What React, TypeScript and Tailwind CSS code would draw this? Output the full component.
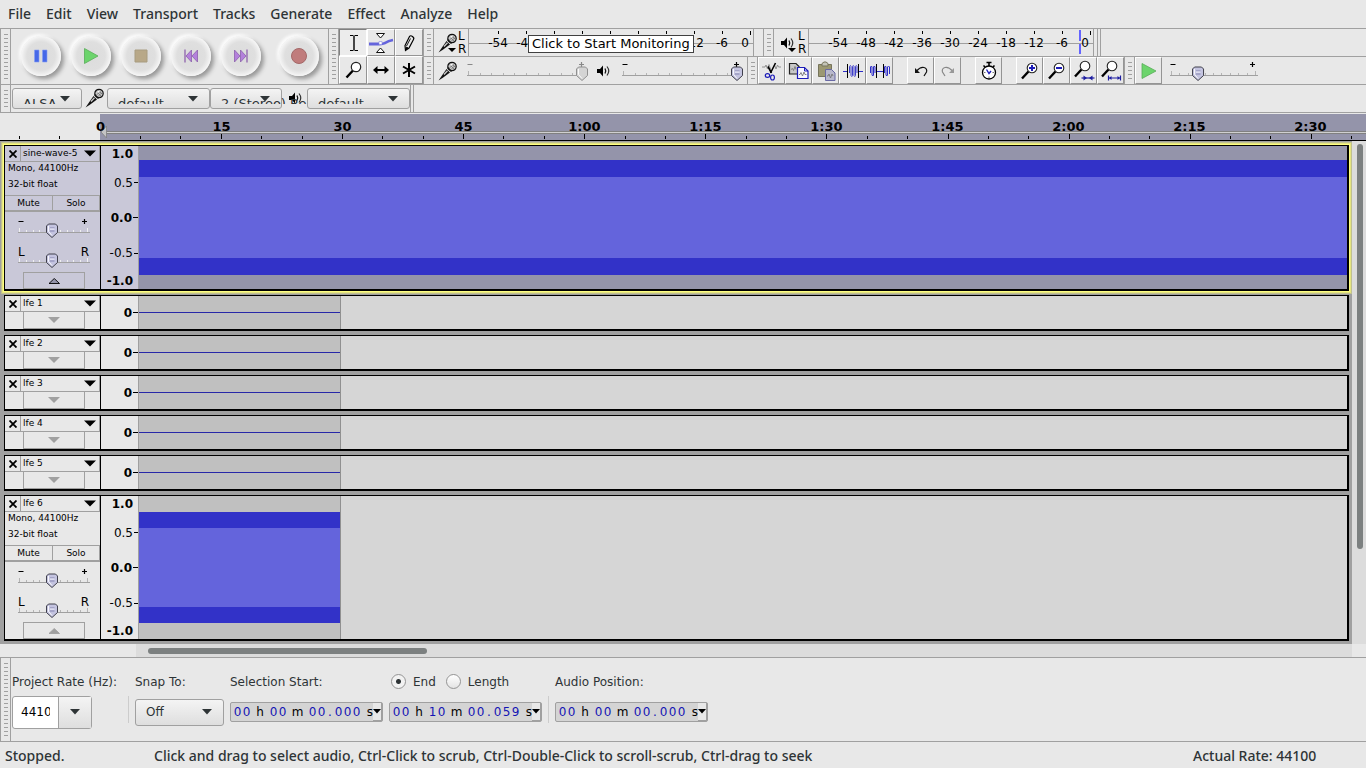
import React, { useId, useState } from "react";

/* ---------- small shared pieces ---------- */

function Grabber() {
  return (
    <div className="flex w-[11px] shrink-0 items-stretch justify-center border-x border-[#a0a0a0] py-[5px]">
      <div className="w-1 bg-[repeating-linear-gradient(to_bottom,#a0a0a0_0px,#a0a0a0_1px,transparent_1px,transparent_4px)]" />
    </div>
  );
}

function IconButton({
  label,
  pressed,
  children,
}: {
  label: string;
  pressed?: boolean;
  children: React.ReactNode;
}) {
  return (
    <button
      type="button"
      aria-label={label}
      aria-pressed={pressed}
      className={
        pressed
          ? "flex h-full min-w-[27px] items-center justify-center border border-t-[#808080] border-r-white border-b-white border-l-[#808080] bg-[#ececec]"
          : "flex h-full min-w-[27px] items-center justify-center border border-t-white border-r-[#949494] border-b-[#949494] border-l-white"
      }
    >
      {children}
    </button>
  );
}

function Mic() {
  return (
    <svg width="20" height="20" viewBox="0 0 20 20" className="shrink-0">
      <path d="M0.500 19.500L8.500 8l3.500 3.500L4.500 17z" fill="#111" />
      <path d="M6 13.500L9.500 9.800" stroke="#ccc" strokeWidth="1.300" />
      <circle cx="14" cy="5.500" r="4.200" fill="#c8c8c8" stroke="#111" strokeWidth="1.200" />
      <path d="M9.500 6.500l4 4" stroke="#111" strokeWidth="1.600" />
      <path d="M11.500 3.500l4.500 4.500M13.500 2.500l3.500 3.500M11.500 7l4-4M13 8.500l4-4" stroke="#666" strokeWidth="0.700" />
      <path d="M12.500 4.500l2-1.500" stroke="#fff" strokeWidth="1.300" />
    </svg>
  );
}

function Speaker() {
  return (
    <svg width="14" height="14" viewBox="0 0 14 14" className="shrink-0">
      <path d="M0 5h3l3-3.500v11L3 9H0z" fill="#000" />
      <path d="M8 4.500q1.500 2.500 0 5" fill="none" stroke="#111" strokeWidth="1.300" />
      <path d="M10 2.500q3.500 4.500 0 9" fill="none" stroke="#333" strokeWidth="1.200" />
    </svg>
  );
}

function Caret() {
  return (
    <svg width="10" height="6" viewBox="0 0 10 6" className="pointer-events-none shrink-0">
      <path d="M0 0h10L5 5.500z" fill="#2e3436" />
    </svg>
  );
}

function Slider({
  label,
  width,
  start,
  ticks = 10,
  travel,
  disabled,
  light,
  signs = true,
}: {
  label: string;
  width: number;
  start: number;
  ticks?: number;
  travel: number;
  disabled?: boolean;
  light?: boolean;
  signs?: boolean;
}) {
  const [value, setValue] = useState(start);
  const x = 2 + (value / 100) * travel;
  const last = width - 4;
  return (
    <div className="relative h-5 shrink-0" style={{ width }}>
      <svg width={width} height="20" className="block overflow-visible">
        <path d={`M0 13.500H${width}`} stroke="#a0a0a0" />
        {Array.from({ length: ticks + 1 }, (_, i) => {
          const tx = Math.round(1 + (i * last) / ticks) + 0.5;
          return (
            <path
              key={i}
              d={`M${tx} ${i === 0 || i === ticks ? 9 : 11}V13`}
              stroke={light ? "#f0f0f0" : "#b4b4b4"}
            />
          );
        })}
        {signs && (
          <path
            d={`M0.500 2.500h5M${width - 8} 2.500h5M${width - 5.5} 0v5`}
            stroke={disabled ? "#888" : "#000"}
            strokeWidth="1.200"
          />
        )}
        <g transform={`translate(${x - 5.5} 4.5)`}>
          <path
            d="M2 0.500h7l2 2v6.500L5.500 14L0 9v-6.500z"
            fill={disabled ? "#d4d4d4" : "#c4c4e0"}
            stroke={disabled ? "#909090" : "#40404c"}
          />
          <path d="M2 2.500v5.500l3.500 4" stroke="#fff" fill="none" opacity="0.900" />
          {!disabled && <path d="M3.500 4.500h4.500M3.500 7.500h4.500" stroke="#8484b0" />}
          {!disabled && <path d="M3.500 5.500h4.500" stroke="#f4f4ff" />}
        </g>
      </svg>
      <input
        type="range"
        aria-label={label}
        value={value}
        disabled={disabled}
        onChange={(e) => setValue(Number(e.target.value))}
        className="absolute inset-0 m-0 h-full w-full opacity-0"
      />
    </div>
  );
}

/* ---------- transport ---------- */

function RoundButton({ label, children }: { label: string; children: React.ReactNode }) {
  return (
    <button type="button" aria-label={label} className="flex w-[50px] items-center justify-center pb-px">
      <span className="flex h-[40px] w-[40px] items-center justify-center rounded-full bg-[radial-gradient(circle,#dcdcdc_0%,#dfdfdf_50%,#ececec_62%,#f6f6f6_70%)] shadow-[3px_3px_4px_#989898,-2px_-2px_3px_#fcfcfc]">
        <svg width="18" height="18" viewBox="0 0 18 18">
          {children}
        </svg>
      </span>
    </button>
  );
}

function Transport() {
  return (
    <div className="flex w-[317px] shrink-0 pl-[5px]">
      <RoundButton label="Pause">
        <path d="M2.500 3H7v12H2.500zM10.500 3H15v12h-4.500z" fill="#4668e8" stroke="#86a0f4" strokeWidth="0.600" />
      </RoundButton>
      <RoundButton label="Play">
        <path d="M2.500 1.500v15L16 9z" fill="#6cd46c" stroke="#58ac58" strokeWidth="0.800" />
      </RoundButton>
      <RoundButton label="Stop">
        <path d="M3 3h12v12H3z" fill="#b8a888" stroke="#a89c80" />
      </RoundButton>
      <RoundButton label="Skip to Start">
        <path d="M3 2.500v13" stroke="#8858a8" strokeWidth="1.200" />
        <path d="M9.500 3v12L4 9zM15.500 3v12L10 9z" fill="#b480dc" stroke="#8c60ac" strokeWidth="0.800" />
      </RoundButton>
      <RoundButton label="Skip to End">
        <path d="M15 2.500v13" stroke="#8858a8" strokeWidth="1.200" />
        <path d="M8.500 3v12L14 9zM2.500 3v12L8 9z" fill="#b480dc" stroke="#8c60ac" strokeWidth="0.800" />
      </RoundButton>
      <div className="ml-2 flex">
        <RoundButton label="Record">
          <circle cx="9" cy="9" r="7.500" fill="#c07c7c" stroke="#a46868" />
        </RoundButton>
      </div>
    </div>
  );
}

/* ---------- tools ---------- */

function Tools() {
  return (
    <div className="grid shrink-0 grid-cols-[28px_28px_28px] grid-rows-[27px_28px]">
      <IconButton label="Selection Tool" pressed>
        <svg width="18" height="20" viewBox="0 0 18 20" fill="none" stroke="#000">
          <path d="M6 2.500h3.500M10.500 2.500H14M6 17.500h3.500M10.500 17.500H14" />
          <path d="M10 3v14" strokeWidth="1.400" />
        </svg>
      </IconButton>
      <IconButton label="Envelope Tool">
        <svg width="26" height="22" viewBox="0 0 26 22">
          <path d="M1 12h10q5 0 7-1.500t7-2.500" stroke="#6464dc" strokeWidth="2.800" fill="none" />
          <path d="M8.500 1.500h8L12.500 6zM8.500 20.500h8L12.500 16z" fill="#fff" stroke="#111" />
          <path d="M11 9.500h3v3h-3z" fill="#fff" stroke="#8888e0" strokeWidth="0.600" />
        </svg>
      </IconButton>
      <IconButton label="Draw Tool">
        <svg width="16" height="18" viewBox="0 0 16 18">
          <path d="M4.500 16.500l-.5-5L8.500 2.500q1-1.500 3 0t1 3L8 14z" fill="#e8e8e8" stroke="#000" strokeWidth="1.200" />
          <path d="M9.500 4.500L5.500 12M4.500 16l1-3 1.500 1z" fill="#000" stroke="#000" strokeWidth="0.900" />
        </svg>
      </IconButton>
      <IconButton label="Zoom Tool">
        <svg width="18" height="18" viewBox="0 0 18 18">
          <path d="M2.500 16.500L9 9.500" stroke="#000" strokeWidth="2.400" />
          <circle cx="12" cy="6" r="4.700" fill="#fff" stroke="#222" strokeWidth="1.200" />
        </svg>
      </IconButton>
      <IconButton label="Time Shift Tool">
        <svg width="18" height="10" viewBox="0 0 18 10">
          <path d="M3 5h12" stroke="#000" strokeWidth="2" />
          <path d="M1 5l4.500-4v8zM17 5l-4.500-4v8z" fill="#000" />
        </svg>
      </IconButton>
      <IconButton label="Multi Tool">
        <svg width="16" height="16" viewBox="0 0 16 16" stroke="#000" strokeWidth="2">
          <path d="M8 1v14M2 4.500l12 7M14 4.500l-12 7" />
        </svg>
      </IconButton>
    </div>
  );
}

/* ---------- level meters ---------- */

const levels = ["-54", "-48", "-42", "-36", "-30", "-24", "-18", "-12", "-6"];

function Meter({
  label,
  icon,
  peak,
  tooltip,
}: {
  label: string;
  icon: React.ReactNode;
  peak?: boolean;
  tooltip?: string;
}) {
  // Labels that the tooltip covers completely are left out.
  const covered = (i: number) => Boolean(tooltip) && i >= 2 && i <= 6;
  return (
    <div className="flex w-[329px] shrink-0 pl-1">
      <button type="button" aria-label={label + " options"} className="relative flex w-5 items-center justify-center">
        {icon}
        <svg width="8" height="4" viewBox="0 0 8 4" className="absolute right-[2px] bottom-1">
          <path d="M0 0h8L4 4z" fill="#000" />
        </svg>
      </button>
      <div className="flex w-[10px] flex-col justify-center text-xs leading-[13px]">
        <span>L</span>
        <span>R</span>
      </div>
      <div
        role="meter"
        aria-label={label}
        className="relative flex w-[286px] border-x border-[#a0a0a0] bg-[linear-gradient(#a0a0a0,#a0a0a0)] bg-[length:100%_1px] bg-[position:0_14px] bg-no-repeat pl-[15px] text-xs leading-7"
      >
        {peak && (
          <div className="absolute top-px right-3 flex h-6 w-[2px] flex-col gap-[3px]">
            <div className="flex-1 bg-[#6464ff]" />
            <div className="flex-1 bg-[#6464ff]" />
          </div>
        )}
        {levels.map((l, i) => (
          <div key={l} className="relative flex w-7 justify-center">
            <div className="absolute top-[2px] left-[14px] h-[3px] w-px bg-black" />
            {!covered(i) && <span>{l}</span>}
          </div>
        ))}
        <div className="relative flex flex-1 justify-end pr-1">
          <div className="absolute top-[2px] right-[2px] h-1 w-px bg-black" />
          <span>0</span>
        </div>
        {tooltip && (
          <div
            role="tooltip"
            className="absolute top-[6px] left-[59px] z-10 border border-[#404040] bg-white px-[3px] text-[13px] leading-4 whitespace-nowrap"
          >
            {tooltip}
          </div>
        )}
      </div>
    </div>
  );
}

/* ---------- edit toolbar ---------- */

function Magnifier({ children, small }: { children: React.ReactNode; small?: boolean }) {
  return (
    <svg width="22" height="22" viewBox="0 0 22 22">
      <g transform={small ? "translate(-1 -2)" : ""}>
        <path d="M3 18.500L9.500 11.500" stroke="#000" strokeWidth="2.400" />
        <circle cx="13" cy="8" r="4.800" fill="#fff" stroke="#222" strokeWidth="1.100" />
      </g>
      {children}
    </svg>
  );
}

function EditTools() {
  return (
    <div className="flex shrink-0">
      <IconButton label="Cut">
        <svg width="22" height="22" viewBox="0 0 22 22" fill="none">
          <path d="M1 7h3l1-2 1.500 4L8 4.500l1.500 4.500M13.500 5l1.500 4 1.500-4 1 2H20" stroke="#888" strokeWidth="0.900" />
          <path d="M14.500 3L9.500 13M7 6.500l3.500 6.500" stroke="#000" strokeWidth="1.600" />
          <ellipse cx="6.500" cy="15.500" rx="2.200" ry="1.900" stroke="#1c1cb8" strokeWidth="1.200" />
          <ellipse cx="11.500" cy="17.500" rx="1.900" ry="2.500" stroke="#1c1cb8" strokeWidth="1.200" />
        </svg>
      </IconButton>
      <IconButton label="Copy">
        <svg width="22" height="20" viewBox="0 0 22 20" fill="none">
          <path d="M1.500 2.500h6.500l3 3v7.500H1.500z" fill="#c8c8c8" stroke="#222" strokeWidth="1.200" />
          <path d="M3 8.500l1.500-1 1 2 1.500-4 1 3" stroke="#777" strokeWidth="0.900" />
          <path d="M9.500 6.500h7l3.500 3.500v7.500H9.500z" fill="#f6f6ff" stroke="#1c1cb8" strokeWidth="1.200" />
          <path d="M16.500 6.500V10H20" stroke="#1c1cb8" />
          <path d="M11 13.500h1l1-2 1.500 3.500 1.500-4 1 2.500h1.500" stroke="#777" strokeWidth="0.900" />
        </svg>
      </IconButton>
      <IconButton label="Paste">
        <svg width="22" height="22" viewBox="0 0 22 22" fill="none">
          <path d="M3.500 4.500h13v12h-13z" fill="#9c9872" stroke="#77755c" />
          <path d="M7 6V3.500l2-1.500h2l2 1.500V6z" fill="#c4c4b8" stroke="#77755c" />
          <path d="M10.500 9.500h6l3.500 3.500v7.500h-9.500z" fill="#b8b8cc" stroke="#6868a4" />
          <path d="M12 16h1l1-2 1.500 4 1.500-4 1 2" stroke="#777" strokeWidth="0.900" />
        </svg>
      </IconButton>
      <IconButton label="Trim">
        <svg width="22" height="16" viewBox="0 0 22 16" fill="none">
          <path d="M1 8.500h4.500M16.500 8.500H21" stroke="#2c2cc8" strokeWidth="1.100" />
          <path d="M7.500 10V3.500q1-2 1.500 0v9q.8 2 1.500 0v-9q.8-2 1.500 0v9q.8 2 1.500 0v-9q.8-2 1.500 0V10" stroke="#2c2cc8" strokeWidth="0.900" />
          <path d="M5.500 1v14M16.500 1v14" stroke="#000" />
        </svg>
      </IconButton>
      <IconButton label="Silence">
        <svg width="22" height="16" viewBox="0 0 22 16" fill="none">
          <path d="M1.500 10V4q1-2 1.500 0v8q.8 2 1.500 0V4q.8-2 1.500 0v6M7.500 8.500h7M15.500 10V4q1-2 1.500 0v8q.8 2 1.500 0V4q1-2 2 0v7" stroke="#2c2cc8" />
          <path d="M7.500 1v14M14.500 1v14" stroke="#000" />
        </svg>
      </IconButton>
      <div className="ml-[14px] flex">
        <IconButton label="Undo">
          <svg width="16" height="14" viewBox="0 0 16 14">
            <path d="M3.500 7Q7.500 2.500 11 3.500t2.500 4.500L11 12" fill="none" stroke="#111" strokeWidth="1.200" />
            <path d="M2 4v5h5z" fill="#111" />
          </svg>
        </IconButton>
        <IconButton label="Redo">
          <svg width="16" height="14" viewBox="0 0 16 14">
            <path d="M12.500 7Q8.500 2.500 5 3.500T2.500 8L5 12" fill="none" stroke="#888" strokeWidth="1.200" />
            <path d="M14 4v5H9z" fill="#999" />
          </svg>
        </IconButton>
      </div>
      <div className="ml-[14px] flex">
        <IconButton label="Sync-Lock Tracks">
          <svg width="18" height="20" viewBox="0 0 18 20" fill="none">
            <circle cx="9" cy="11.500" r="6.500" fill="#fff" stroke="#000" strokeWidth="1.300" />
            <path d="M6.500 1.500h5M9 1v4M3.500 4.500l1.500 1.500M14.500 4.500l-1.500 1.500" stroke="#000" strokeWidth="1.600" />
            <path d="M6.500 8.500l2.500 4 2-2.500" stroke="#1c1cb8" strokeWidth="1.400" />
            <path d="M9 15.500V17M4 11.500h1.500M12.500 11.500H14" stroke="#777" />
          </svg>
        </IconButton>
      </div>
      <div className="ml-[14px] flex">
        <IconButton label="Zoom In">
          <Magnifier>
            <path d="M10 8h6M13 5v6" stroke="#1c1cb8" strokeWidth="2" />
          </Magnifier>
        </IconButton>
        <IconButton label="Zoom Out">
          <Magnifier>
            <path d="M10 8h6" stroke="#1c1cb8" strokeWidth="2" />
          </Magnifier>
        </IconButton>
        <IconButton label="Fit Selection">
          <Magnifier small>
            <path d="M8.500 18h13" stroke="#1c1ca0" strokeWidth="1.200" />
            <path d="M10.500 15.500v5L14 18zM19.500 15.500v5L16 18z" fill="#1c1ca0" />
          </Magnifier>
        </IconButton>
        <IconButton label="Fit Project">
          <Magnifier small>
            <path d="M8.500 15.500v5M20.500 15.500v5M9 18h11" stroke="#1c1ca0" strokeWidth="1.200" />
            <path d="M9 18l2.500-2v4zM20 18l-2.500-2v4z" fill="#1c1ca0" />
          </Magnifier>
        </IconButton>
      </div>
    </div>
  );
}

/* ---------- device toolbar ---------- */

function DeviceSelect({ label, value, size }: { label: string; value: string; size: string }) {
  return (
    <div
      className={
        size +
        " relative h-[21px] shrink-0 rounded-[3px] border border-[#a0a0a0] bg-linear-to-b from-[#f4f4f4] to-[#dedede]"
      }
    >
      <div className="absolute inset-x-0 top-0 h-[15px] overflow-x-visible overflow-y-clip">
        <select
          aria-label={label}
          defaultValue={value}
          className="h-[30px] appearance-none bg-transparent pl-[10px] text-[13px] text-[#2e3436] outline-none"
        >
          <option>{value}</option>
        </select>
      </div>
      <div className="pointer-events-none absolute top-[7px] right-[11px]">
        <Caret />
      </div>
    </div>
  );
}

/* ---------- timeline ---------- */

const times = ["0", "15", "30", "45", "1:00", "1:15", "1:30", "1:45", "2:00", "2:15", "2:30"];

function Timeline() {
  return (
    <div className="relative flex h-7 overflow-hidden border-b border-black">
      <div className="w-[100px] shrink-0" />
      <div className="mt-px flex-1 bg-[#9494aa]" />
      <svg className="absolute inset-0 h-full w-full">
        <path d="M106 18.500H2600M106 20.500H2600" stroke="#808080" />
        <path d="M106 19.500H2600" stroke="#d0d0d0" />
        <path d="M101 19l5.500-6v12z" fill="#c4c4c4" stroke="#808080" strokeWidth="0.800" />
        {Array.from({ length: 62 }, (_, i) => {
          const x = Math.round(19 + i * 40.37) + 0.5;
          return i === 2 ? null : <path key={i} d={`M${x} ${i % 3 === 2 ? 21 : 23}V26`} stroke="#000" />;
        })}
      </svg>
      <div className="absolute top-2 left-10 flex text-[13px] leading-3 font-bold">
        {times.map((t) => (
          <span key={t} className="w-[121px] text-center">
            {t}
          </span>
        ))}
      </div>
    </div>
  );
}

/* ---------- tracks ---------- */

function TitleRow({ name }: { name: string }) {
  return (
    <div className="flex h-4 shrink-0 border-b border-[#a0a0a0]">
      <button type="button" aria-label={"Close " + name} className="flex w-4 items-center justify-center border-r border-[#a0a0a0]">
        <svg width="8" height="8" viewBox="0 0 8 8">
          <path d="M0.500 0.500l7 7M7.500 0.500l-7 7" stroke="#000" strokeWidth="1.800" />
        </svg>
      </button>
      <button type="button" className="flex flex-1 items-center justify-between border-r border-[#a0a0a0] pr-[3px] pl-[2px] text-[9px]">
        <span className="whitespace-nowrap">{name}</span>
        <svg width="12" height="7" viewBox="0 0 12 7">
          <path d="M0 0.500h12L6 6.500z" fill="#000" />
        </svg>
      </button>
    </div>
  );
}

function TrackFrame({ selected, children }: { selected?: boolean; children: React.ReactNode }) {
  return (
    <section
      className={
        selected
          ? "flex border-t border-r-2 border-b-2 border-l border-black shadow-[0_0_0_1px_#ffff80,0_0_0_2px_#e4e480,0_0_0_3px_#c0c090]"
          : "flex border-t border-r-2 border-b-2 border-l border-black"
      }
    >
      {children}
    </section>
  );
}

function ScaleTick({ major }: { major?: boolean }) {
  return <div className={major ? "ml-px h-px w-[5px] bg-black" : "ml-px h-px w-1 bg-black"} />;
}

function FullTrack({ name, selected }: { name: string; selected?: boolean }) {
  const tone = selected ? "bg-[#c9c8d8]" : "bg-[#e8e8e8]";
  return (
    <TrackFrame selected={selected}>
      <div className={tone + " flex h-[143px] w-[96px] shrink-0 flex-col border-r border-black"}>
        <TitleRow name={name} />
        <div className="h-[33px] pl-[3px] text-[9px] leading-[16px] whitespace-nowrap">
          <div className="-mt-[2px]">Mono, 44100Hz</div>
          <div>32-bit float</div>
        </div>
        <div className="flex h-[17px] border-t border-b-2 border-[#a0a0a0] text-[9px] leading-[15px]">
          <button type="button" className="w-12 border-r border-[#a0a0a0]">
            Mute
          </button>
          <button type="button" className="flex-1 border-r border-[#a0a0a0]">
            Solo
          </button>
        </div>
        <div className="mt-[7px] pl-[13px]">
          <Slider label={name + " gain"} width={72} start={50} travel={64} light={selected} />
        </div>
        <div className="relative mt-[10px] pl-[13px]">
          <Slider label={name + " pan"} width={72} start={50} travel={64} light={selected} signs={false} />
          <div className="pointer-events-none absolute inset-x-0 -top-1 flex justify-between pr-[11px] pl-[13px] text-xs leading-[14px]">
            <span>L</span>
            <span>R</span>
          </div>
        </div>
        <button
          type="button"
          aria-label={"Collapse " + name}
          className="mt-[3px] ml-[18px] flex h-[17px] w-[62px] items-center justify-center border border-[#a0a0a0]"
        >
          <svg width="12" height="6" viewBox="0 0 12 6">
            <path
              d="M1 5.500h10.500L6.250 0.500z"
              fill={selected ? "#9494aa" : "#a0a0a0"}
              stroke={selected ? "#000" : "#a0a0a0"}
              strokeWidth="0.900"
            />
          </svg>
        </button>
      </div>
      <div className={tone + " flex w-[38px] shrink-0 flex-col border-r border-[#a0a0a0] text-xs *:flex *:items-center *:justify-end"}>
        <div className="h-[15px] pr-[5px] font-bold">1.0</div>
        <div className="h-[41px] pt-[2px]">
          0.5
          <ScaleTick />
        </div>
        <div className="h-[31px] font-bold">
          0.0
          <ScaleTick major />
        </div>
        <div className="h-10">
          -0.5
          <ScaleTick />
        </div>
        <div className="h-4 pr-[5px] font-bold">-1.0</div>
      </div>
      {selected ? (
        <div className="flex flex-1 flex-col bg-[#9494aa] py-[14px]">
          <div className="flex-1 border-y-[17px] border-[#3232c8] bg-[#6464dc]" />
        </div>
      ) : (
        <div className="flex flex-1 bg-[#d6d6d6]">
          <div className="flex w-[202px] flex-col border-r border-[#909090] bg-[#c0c0c0] py-4">
            <div className="flex-1 border-y-[16px] border-[#3232c8] bg-[#6464dc]" />
          </div>
        </div>
      )}
    </TrackFrame>
  );
}

function CollapsedTrack({ name }: { name: string }) {
  return (
    <TrackFrame>
      <div className="flex h-[33px] w-[96px] shrink-0 flex-col border-r border-black bg-[#e8e8e8]">
        <TitleRow name={name} />
        <button
          type="button"
          aria-label={"Expand " + name}
          className="ml-[18px] flex h-[17px] w-[62px] items-center justify-center border-x border-b border-[#a0a0a0]"
        >
          <svg width="12" height="6" viewBox="0 0 12 6">
            <path d="M0 0h12L6 6z" fill="#a0a0a0" />
          </svg>
        </button>
      </div>
      <div className="flex w-[38px] shrink-0 items-center justify-end border-r border-[#a0a0a0] bg-[#e8e8e8] text-xs font-bold">
        0<ScaleTick major />
      </div>
      <div className="flex flex-1 bg-[#d6d6d6]">
        <div className="flex w-[202px] items-center border-r border-[#909090] bg-[#c0c0c0]">
          <div className="h-px flex-1 bg-[#2828a8]" />
        </div>
      </div>
    </TrackFrame>
  );
}

/* ---------- selection toolbar ---------- */

function TimeField({ label, h, m, s, ms }: { label: string; h: string; m: string; s: string; ms: string }) {
  const digits = (text: string) =>
    text.split("").map((d, i) => (
      <span key={i} className="w-[9px] text-center text-[#1414b4]">
        {d}
      </span>
    ));
  return (
    <div
      role="group"
      aria-label={label}
      className="flex h-5 w-[153px] items-center rounded-[2px] border border-[#a0a0a0] bg-[#d4d4d4] pl-[2px] text-xs text-black"
    >
      {digits(h)}
      <span className="w-[18px] text-center">h</span>
      {digits(m)}
      <span className="w-[21px] text-center">m</span>
      {digits(s)}
      <span className="w-2 text-center text-[#1414b4]">.</span>
      {digits(ms)}
      <span className="w-3 text-right">s</span>
      <button type="button" aria-label={label + " format"} className="flex flex-1 items-center justify-center self-stretch border-r border-b border-[#a0a0a0] bg-[#e8e8e8]">
        <svg width="8" height="5" viewBox="0 0 8 5">
          <path d="M0 0h8L4 4.500z" fill="#000" />
        </svg>
      </button>
    </div>
  );
}

function Field({ title, children }: { title: React.ReactNode; children: React.ReactNode }) {
  return (
    <div className="flex flex-col pt-3">
      <div className="flex h-[23px] items-center whitespace-nowrap">{title}</div>
      <div className="flex h-[38px] items-center">{children}</div>
    </div>
  );
}

function Radio({ name, text, checked }: { name: string; text: string; checked?: boolean }) {
  return (
    <label className="flex items-center gap-[7px]">
      <input
        type="radio"
        name={name}
        defaultChecked={checked}
        className="h-[15px] w-[15px] appearance-none rounded-full border border-[#949494] bg-linear-to-b from-white to-[#e4e4e4] checked:bg-[radial-gradient(circle,#2e3436_0px,#2e3436_2px,#f2f2f2_3px)]"
      />
      {text}
    </label>
  );
}

function SelectionBar() {
  const rate = useId();
  const snap = useId();
  const mode = useId();
  return (
    <div className="flex h-[85px] border-y border-[#a0a0a0] text-xs text-[#2e3436]">
      <Grabber />
      <div className="flex w-[117px] pl-px">
        <Field title={<label htmlFor={rate}>Project Rate (Hz):</label>}>
          <div className="flex h-[33px] w-20 rounded-[3px] border border-[#a0a0a0]">
            <input
              id={rate}
              defaultValue="44100"
              className="w-[46px] rounded-l-[3px] border-r border-[#a0a0a0] bg-white pr-2 pl-2 text-black outline-none"
            />
            <button
              type="button"
              aria-label="Choose project rate"
              className="flex flex-1 items-center justify-center bg-linear-to-b from-[#f4f4f4] to-[#dedede]"
            >
              <Caret />
            </button>
          </div>
        </Field>
      </div>
      <div className="mt-[38px] h-[27px] w-px bg-[#cccccc]" />
      <div className="flex pl-[6px]">
        <Field title={<label htmlFor={snap}>Snap To:</label>}>
          <div className="relative flex h-[27px] w-[89px] items-center rounded-[3px] border border-[#a0a0a0] bg-linear-to-b from-[#f4f4f4] to-[#dedede]">
            <select id={snap} defaultValue="Off" className="h-full w-full appearance-none bg-transparent pl-[10px] outline-none">
              <option>Off</option>
              <option>Nearest</option>
              <option>Prior</option>
            </select>
            <div className="pointer-events-none absolute right-[11px]">
              <Caret />
            </div>
          </div>
        </Field>
      </div>
      <div className="flex gap-[6px] pl-[6px]">
        <Field title="Selection Start:">
          <TimeField label="Selection start" h="00" m="00" s="00" ms="000" />
        </Field>
        <Field
          title={
            <div className="flex gap-[10px] pl-[2px]">
              <Radio name={mode} text="End" checked />
              <Radio name={mode} text="Length" />
            </div>
          }
        >
          <TimeField label="Selection end" h="00" m="10" s="00" ms="059" />
        </Field>
      </div>
      <div className="mt-[38px] ml-[6px] h-[27px] w-px bg-[#cccccc]" />
      <div className="flex pl-[6px]">
        <Field title="Audio Position:">
          <TimeField label="Audio position" h="00" m="00" s="00" ms="000" />
        </Field>
      </div>
    </div>
  );
}

/* ---------- window ---------- */

const menus = ["File", "Edit", "View", "Transport", "Tracks", "Generate", "Effect", "Analyze", "Help"];

export default function App() {
  return (
    <div className="flex min-h-screen flex-col overflow-hidden bg-[#e8e8e8] font-['DejaVu_Sans',sans-serif] text-black">
      <nav className="flex h-7 items-center gap-[15px] pl-2 font-['Noto_Sans',sans-serif] text-sm font-medium text-[#2e3436]">
        {menus.map((m) => (
          <button key={m} type="button">
            {m}
          </button>
        ))}
      </nav>

      <div className="flex h-[57px] border-y border-[#a0a0a0]">
        <Grabber />
        <Transport />
        <Grabber />
        <Tools />
        <div className="flex flex-1 flex-col">
          <div className="flex h-[27px]">
            <Grabber />
            <Meter label="Recording level" icon={<Mic />} tooltip="Click to Start Monitoring" />
            <Grabber />
            <Meter label="Playback level" icon={<Speaker />} peak />
            <div className="-ml-[6px] w-1 border-x border-[#a0a0a0]" />
          </div>
          <div className="flex h-7 border-t border-[#a0a0a0]">
            <Grabber />
            <div className="flex w-[313px] shrink-0 items-center pl-1">
              <Mic />
              <div className="ml-[9px] flex self-start pt-[5px]">
                <Slider label="Recording volume" width={120} start={100} travel={113} disabled />
              </div>
              <div className="ml-[10px] flex">
                <Speaker />
              </div>
              <div className="ml-[11px] flex self-start pt-[5px]">
                <Slider label="Playback volume" width={120} start={100} travel={113} />
              </div>
            </div>
            <Grabber />
            <EditTools />
            <Grabber />
            <IconButton label="Play at Speed">
              <svg width="16" height="18" viewBox="0 0 16 18">
                <path d="M1 1.500v15L15 9z" fill="#6cd46c" stroke="#58ac58" strokeWidth="0.800" />
              </svg>
            </IconButton>
            <div className="ml-2 pt-[5px]">
              <Slider label="Playback speed" width={88} start={31} travel={84} />
            </div>
          </div>
        </div>
      </div>

      <div className="flex h-7 border-b border-[#a0a0a0]">
        <Grabber />
        <div className="flex pt-[3px] pl-px">
          <DeviceSelect label="Audio host" value="ALSA" size="w-[70px]" />
          <div className="ml-[3px] flex w-[22px]">
            <Mic />
          </div>
          <DeviceSelect label="Recording device" value="default" size="w-[103px]" />
          <DeviceSelect label="Recording channels" value="2 (Stereo) Re" size="w-[72px]" />
          <div className="flex w-[25px] pt-[3px] pl-[7px]">
            <Speaker />
          </div>
          <DeviceSelect label="Playback device" value="default" size="w-[103px]" />
        </div>
        <div className="w-1 border-x border-[#a0a0a0]" />
      </div>

      <Timeline />

      <div className="flex flex-1">
        <div className="flex flex-1 flex-col gap-1 bg-[#a0a0a0] pt-1 pr-[3px] pb-[3px] pl-1">
          <FullTrack name="sine-wave-5" selected />
          <CollapsedTrack name="lfe 1" />
          <CollapsedTrack name="lfe 2" />
          <CollapsedTrack name="lfe 3" />
          <CollapsedTrack name="lfe 4" />
          <CollapsedTrack name="lfe 5" />
          <FullTrack name="lfe 6" />
        </div>
        <div className="w-[14px] bg-[#dcdcdc] pt-[3px] pr-[3px] pl-[5px]">
          <div className="h-[81%] rounded-full bg-[#7c8080]" />
        </div>
      </div>
      <div className="flex h-[13px]">
        <div className="w-[136px]" />
        <div className="flex-1 bg-[#dcdcdc] pt-1 pl-3">
          <div className="h-[6px] w-[279px] rounded-full bg-[#7c8080]" />
        </div>
        <div className="w-[14px]" />
      </div>

      <SelectionBar />

      <footer className="flex h-[26px] items-center pt-[2px] pl-[5px] font-['Noto_Sans',sans-serif] text-sm font-medium text-[#2e3436]">
        <div className="w-[149px]">Stopped.</div>
        <div className="flex-1">
          Click and drag to select audio, Ctrl-Click to scrub, Ctrl-Double-Click to scroll-scrub, Ctrl-drag to seek
        </div>
        <div className="w-[173px]">Actual Rate: 44100</div>
      </footer>
    </div>
  );
}
